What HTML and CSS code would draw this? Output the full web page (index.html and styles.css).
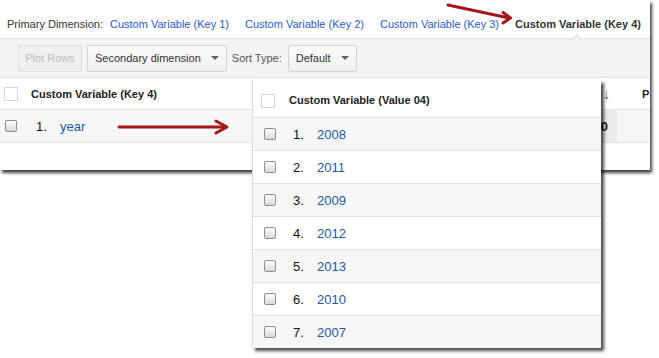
FILE: index.html
```html
<!DOCTYPE html>
<html lang="en">

<head>
    <meta charset="UTF-8">
    <title>Custom Variable report</title>
    <link rel="stylesheet" href="styles.css">
</head>

<body>
    <div class="scene">
        <div class="report">
            <div class="dims">
                <span class="dims-label">Primary Dimension:</span>
                <a class="dim">Custom Variable (Key 1)</a>
                <a class="dim">Custom Variable (Key 2)</a>
                <a class="dim">Custom Variable (Key 3)</a>
                <span class="dim active">Custom Variable (Key 4)</span>
            </div>
            <div class="toolbar">
                <span class="btn disabled">Plot Rows</span>
                <span class="btn select">Secondary dimension <i class="caret"></i></span>
                <span class="sort-label">Sort Type:</span>
                <span class="btn select">Default <i class="caret"></i></span>
            </div>
            <div class="grid head">
                <span class="box"></span>
                <span class="name">Custom Variable (Key 4)</span>
                <span class="metric">&#8595;</span>
                <span class="more">P</span>
            </div>
            <div class="grid row">
                <span class="check"></span>
                <span class="name"><b class="num">1.</b><a class="val">year</a></span>
                <span class="metric">1,260</span>
                <span class="more"></span>
            </div>
        </div>

        <!-- value drilldown laid over the report -->
        <div class="values">
            <div class="values-head">
                <span class="box"></span>
                <span>Custom Variable (Value 04)</span>
            </div>
            <div class="values-row odd"><span class="check"></span><b class="num">1.</b><a class="val">2008</a></div>
            <div class="values-row"><span class="check"></span><b class="num">2.</b><a class="val">2011</a></div>
            <div class="values-row odd"><span class="check"></span><b class="num">3.</b><a class="val">2009</a></div>
            <div class="values-row"><span class="check"></span><b class="num">4.</b><a class="val">2012</a></div>
            <div class="values-row odd"><span class="check"></span><b class="num">5.</b><a class="val">2013</a></div>
            <div class="values-row"><span class="check"></span><b class="num">6.</b><a class="val">2010</a></div>
            <div class="values-row odd last"><span class="check"></span><b class="num">7.</b><a class="val">2007</a></div>
        </div>

        <svg class="arrows" width="659" height="358" viewBox="0 0 659 358">
            <g stroke="#a3171a" stroke-width="3" fill="none" stroke-linecap="round" stroke-linejoin="round">
                <line x1="119" y1="127" x2="225" y2="127" />
                <polyline points="216,121 227,127 216,133" />
                <line x1="448" y1="5" x2="509" y2="18" />
                <polyline points="503,12.5 510.5,18 503,23" />
            </g>
        </svg>
    </div>
</body>

</html>
```

FILE: styles.css
```css
body {
    margin: 0;
    padding: 0;
    background-color: #fff;
    font-family: "Liberation Sans", Arial, sans-serif;
    color: #222;
}

.scene {
    position: relative;
    width: 659px;
    height: 358px;
    overflow: hidden;
}

.report {
    width: 650px;
    height: 170px;
    background-color: #fff;
    box-shadow: 2px 3px 3px rgba(0, 0, 0, 0.75);
    overflow: hidden;
}

/* primary dimension tabs */
.dims {
    position: relative;
    display: flex;
    align-items: center;
    height: 28px;
    padding: 10px 0 0 7px;
    border-bottom: 1px solid #e2e2e2;
    font-size: 11px;
    white-space: nowrap;
}

.dims-label {
    color: #333;
    margin-right: 7px;
}

.dim {
    color: #2a5bc7;
    margin-right: 16px;
}

.dim.active {
    position: relative;
    color: #333;
    font-weight: bold;
}

.dim.active::after {
    content: "";
    position: absolute;
    left: 58px;
    top: 18px;
    width: 7px;
    height: 7px;
    background-color: #f4f4f4;
    border-left: 1px solid #ddd;
    border-top: 1px solid #ddd;
    transform: rotate(45deg);
}

/* toolbar */
.toolbar {
    display: flex;
    align-items: center;
    height: 38px;
    padding-left: 18px;
    background-color: #f4f4f4;
    border-bottom: 1px solid #e2e2e2;
    font-size: 11px;
    white-space: nowrap;
}

.btn {
    display: flex;
    align-items: center;
    height: 25px;
    padding: 0 7px;
    border: 1px solid #d2d2d2;
    border-radius: 2px;
    background: linear-gradient(#fbfbfb, #f1f1f1);
    color: #333;
    margin-right: 5px;
}

.btn.disabled {
    width: 48px;
    justify-content: center;
    color: #bdbdbd;
    background: #efefef;
    border-color: #e0e0e0;
}

.caret {
    display: inline-block;
    margin-left: 10px;
    border-left: 4px solid transparent;
    border-right: 4px solid transparent;
    border-top: 4px solid #666;
}

.sort-label {
    color: #555;
    margin: 0 6px 0 0;
}

/* report table */
.grid {
    display: grid;
    grid-template-columns: 27px 520px 70px 33px;
    align-items: center;
    border-bottom: 1px solid #e2e2e2;
    white-space: nowrap;
}

.grid.head {
    height: 31px;
    font-size: 11px;
    font-weight: bold;
}

.grid.row {
    height: 32px;
    background-color: #f7f7f7;
    font-size: 13px;
}

.grid .box {
    margin-left: 4px;
}

.grid .check {
    margin-left: 5px;
}

.grid.head .name {
    padding-left: 4px;
}

.grid.row .name {
    padding-left: 9px;
}

.metric {
    align-self: stretch;
    display: flex;
    align-items: center;
    justify-content: flex-end;
    padding-right: 9px;
    font-weight: bold;
}

.grid.head .metric {
    font-size: 14px;
    color: #555;
    padding-right: 7px;
}

.grid.row .metric {
    background-color: #ebebeb;
}

.more {
    padding-left: 25px;
    overflow: hidden;
}

.box {
    display: inline-block;
    width: 12px;
    height: 12px;
    border: 1px solid #d6d6d6;
    background-color: #fff;
}

.check {
    display: inline-block;
    width: 10px;
    height: 10px;
    border: 1px solid #8d8d8d;
    border-radius: 2px;
    background: linear-gradient(#fdfdfd, #dadada);
}

.num {
    display: inline-block;
    width: 24px;
    font-weight: normal;
    color: #111;
}

.val {
    color: #1d5a9e;
}

/* value drilldown */
.values {
    position: absolute;
    left: 252px;
    top: 80px;
    width: 348px;
    background-color: #fff;
    border-left: 1px solid #dcdcdc;
    box-shadow: 3px 3px 3px rgba(0, 0, 0, 0.7);
}

.values-head {
    display: flex;
    align-items: center;
    height: 37px;
    padding-left: 8px;
    border-bottom: 1px solid #e2e2e2;
    font-size: 11px;
    font-weight: bold;
}

.values-head .box {
    margin-right: 14px;
    margin-top: 4px;
}

.values-head span:last-child {
    margin-top: 3px;
}

.values-row {
    display: flex;
    align-items: center;
    height: 32px;
    padding-left: 11px;
    border-bottom: 1px solid #e2e2e2;
    font-size: 13px;
}

.values-row.odd {
    background-color: #f7f7f7;
}

.values-row.last {
    border-bottom: none;
}

.values-row .check {
    margin-right: 17px;
}

.arrows {
    position: absolute;
    left: 0;
    top: 0;
}
```
